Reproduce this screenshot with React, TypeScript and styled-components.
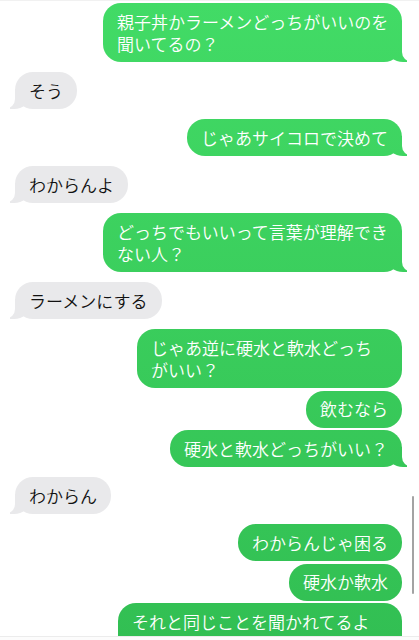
import styled, { createGlobalStyle, css } from 'styled-components';

//#region styled
const greenFill = 'linear-gradient(180deg, #42db66 0%, #3acd5c 50%, #32bf53 100%) fixed';
const grayFill = '#e9e9eb';

const GlobalStyle = createGlobalStyle`
  html,
  body {
    margin: 0;
    padding: 0;
    background: #fff;
  }

  body {
    font-family: 'Noto Sans CJK JP', 'Noto Sans', sans-serif;
    -webkit-font-smoothing: antialiased;
  }
`;

const Screen = styled.div`
  position: relative;
  display: flex;
  flex-direction: column;
  height: 640px;
  overflow: hidden;
  border-top: 1px solid #f1f1f1;
  box-sizing: border-box;
`;

const Thread = styled.div`
  display: flex;
  flex: 1;
  flex-direction: column;
  min-height: 0;
  padding: 2px 17px 0 15px;
  overflow: hidden;
`;

const Composer = styled.div`
  flex: none;
  height: 3px;
  background: #fcfcfc;
  border-top: 1px solid #ececec;
`;

const Row = styled.div<{ $mine: boolean; $gap: number }>`
  display: flex;
  justify-content: ${(p) => (p.$mine ? 'flex-end' : 'flex-start')};
  margin-top: ${(p) => p.$gap}px;
  flex: none;
`;

const mineTail = css`
  &::before {
    right: -5px;
    border-bottom-left-radius: 16px 14px;
    background: ${greenFill};
  }

  &::after {
    right: -26px;
    border-bottom-left-radius: 10px;
  }
`;

const theirTail = css`
  &::before {
    left: -5px;
    border-bottom-right-radius: 16px 14px;
    background: ${grayFill};
  }

  &::after {
    left: -26px;
    border-bottom-right-radius: 10px;
  }
`;

const Bubble = styled.div<{ $mine: boolean; $tail: boolean; $width?: number }>`
  position: relative;
  z-index: 0;
  box-sizing: border-box;
  width: ${(p) => (p.$width ? `${p.$width}px` : 'auto')};
  padding: 7.5px 14px;
  border-radius: 18px;
  background: ${(p) => (p.$mine ? greenFill : grayFill)};
  color: ${(p) => (p.$mine ? '#fff' : '#111')};
  font-size: 17px;
  font-weight: 350;
  line-height: 22px;

  ${(p) =>
    p.$tail &&
    css`
      &::before,
      &::after {
        content: '';
        position: absolute;
        z-index: -1;
        bottom: 0;
        height: 20px;
      }

      &::before {
        width: 20px;
      }

      &::after {
        width: 26px;
        background: #fff;
      }

      ${p.$mine ? mineTail : theirTail}
    `}
`;

const Line = styled.span`
  display: block;
  white-space: nowrap;
`;

const ScrollThumb = styled.div`
  position: absolute;
  top: 495px;
  right: 5px;
  width: 2.5px;
  height: 98px;
  border-radius: 2px;
  background: #a3a3a3;
`;
//#endregion

interface Message {
  mine: boolean;
  lines: string[];
  tail?: boolean;
  width?: number;
  first?: boolean;
}

const messages: Message[] = [
  { mine: true, lines: ['親子丼かラーメンどっちがいいのを', '聞いてるの？'], tail: true, width: 299, first: true },
  { mine: false, lines: ['そう'], tail: true },
  { mine: true, lines: ['じゃあサイコロで決めて'], tail: true },
  { mine: false, lines: ['わからんよ'], tail: true },
  { mine: true, lines: ['どっちでもいいって言葉が理解でき', 'ない人？'], tail: true, width: 299 },
  { mine: false, lines: ['ラーメンにする'], tail: true },
  { mine: true, lines: ['じゃあ逆に硬水と軟水どっち', 'がいい？'], width: 265 },
  { mine: true, lines: ['飲むなら'] },
  { mine: true, lines: ['硬水と軟水どっちがいい？'], tail: true },
  { mine: false, lines: ['わからん'], tail: true },
  { mine: true, lines: ['わからんじゃ困る'] },
  { mine: true, lines: ['硬水か軟水'] },
  { mine: true, lines: ['それと同じことを聞かれてるよ', 'うなもん'], tail: true, width: 284 },
];

const App = () => {
  return (
    <>
      <GlobalStyle />
      <Screen>
        <Thread>
          {messages.map((m, i) => {
            const prev = messages[i - 1];
            const gap = m.first ? 0 : prev && prev.mine === m.mine && !prev.tail ? 2.5 : 10;
            return (
              <Row key={i} $mine={m.mine} $gap={gap}>
                <Bubble $mine={m.mine} $tail={!!m.tail} $width={m.width}>
                  {m.lines.map((line) => (
                    <Line key={line}>{line}</Line>
                  ))}
                </Bubble>
              </Row>
            );
          })}
        </Thread>
        <Composer />
        <ScrollThumb />
      </Screen>
    </>
  );
};

export default App;
